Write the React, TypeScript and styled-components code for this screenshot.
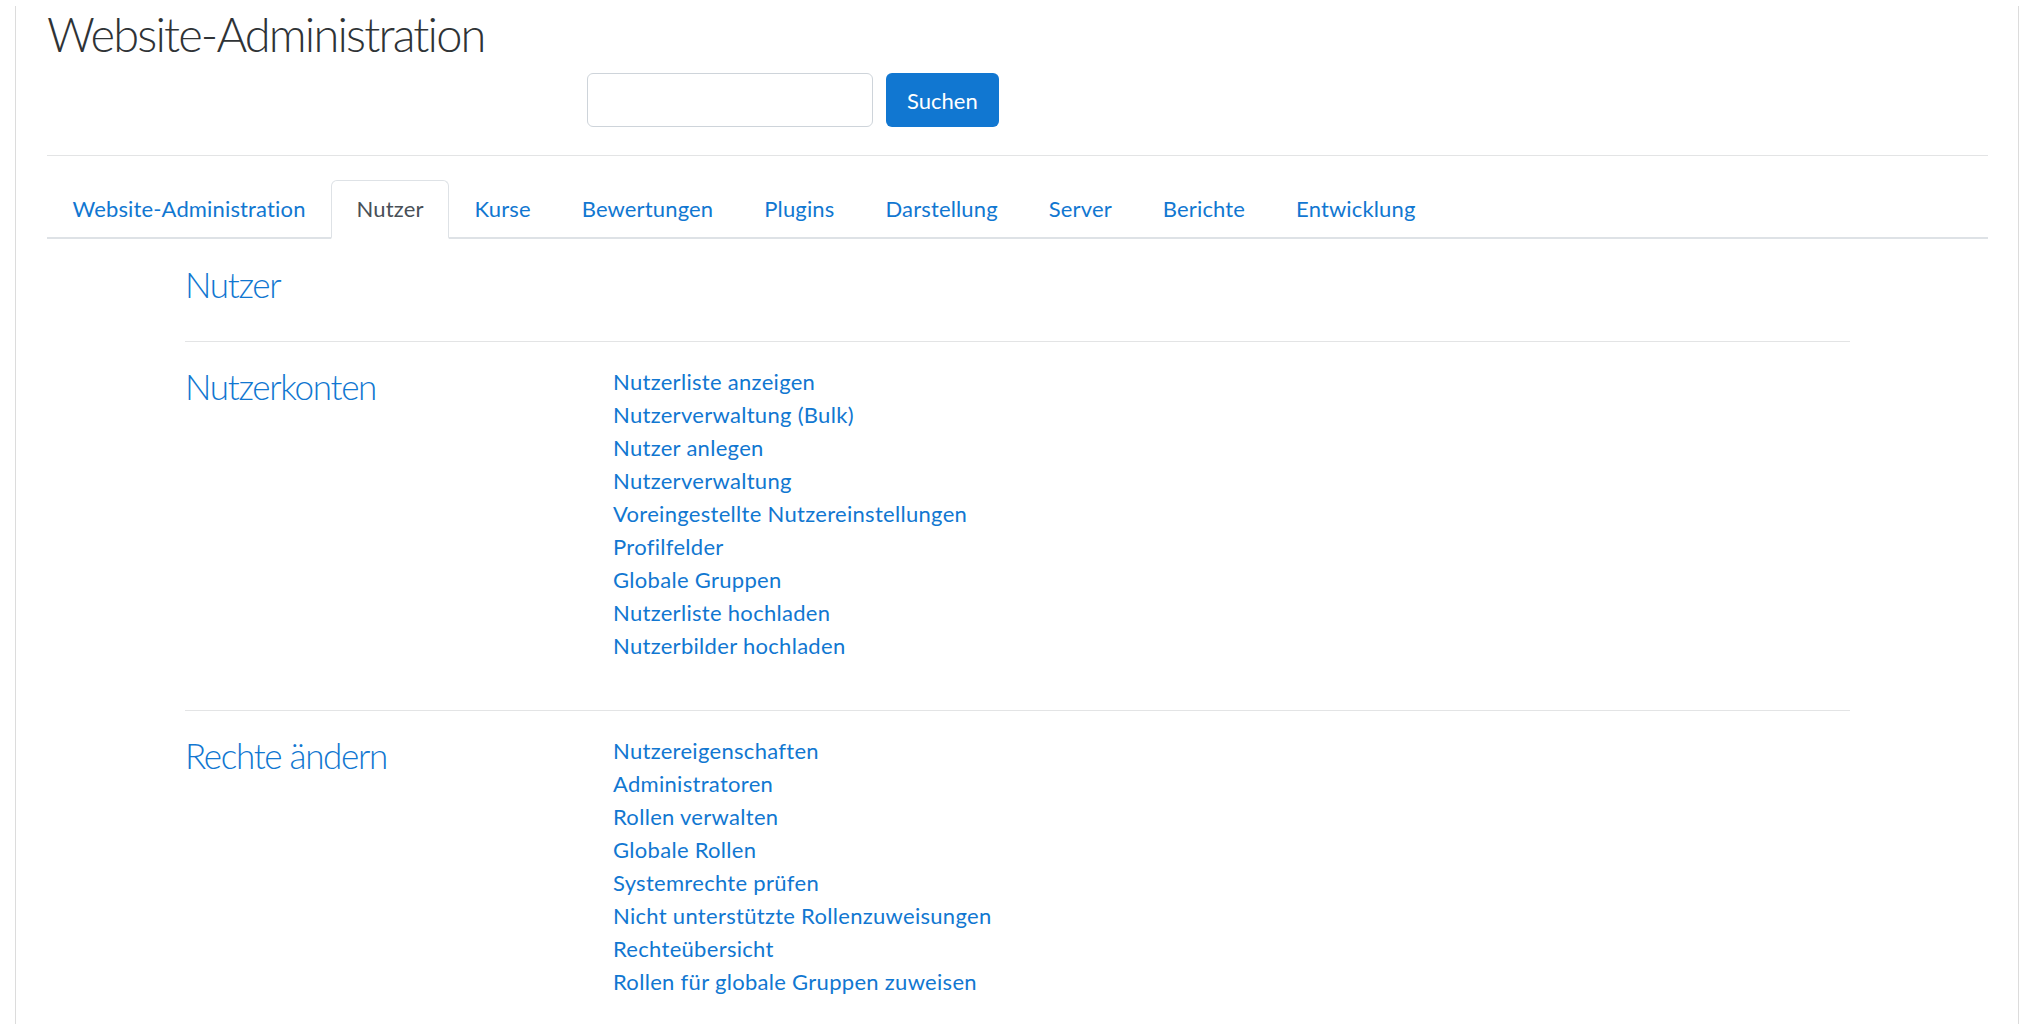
import styled, { createGlobalStyle } from "styled-components";

const GlobalStyle = createGlobalStyle`
    html, body {
        margin: 0;
        padding: 0;
        background: #fff;
    }
    body {
        font-family: Lato, "Liberation Sans", sans-serif;
        color: #373a3c;
    }
    * {
        box-sizing: border-box;
    }
`

const Frame = styled.div`
    margin-left: 15px;
    width: 2004px;
    min-height: 1024px;
    border-left: 1px solid #dcdcdc;
    border-right: 1px solid #dcdcdc;
    padding: 0 30px 0 31px;
`

const Title = styled.h1`
    margin: 6px 0 0 0;
    font-size: 47px;
    font-weight: 300;
    line-height: 1.2;
    letter-spacing: -1.85px;
    color: #2f3336;
`

const SearchForm = styled.form`
    display: flex;
    gap: 13px;
    margin: 11px 0 0 540px;
`

const SearchInput = styled.input`
    width: 286px;
    height: 54px;
    border: 1.5px solid #ced4da;
    border-radius: 6px;
    font-size: 22px;
    padding: 0 16px;
    font-family: inherit;
`

const SearchButton = styled.button`
    height: 54px;
    padding: 0 21px;
    border: none;
    border-radius: 6px;
    background-color: #1177d1;
    color: #fff;
    font-family: inherit;
    font-size: 22px;
    cursor: pointer;
`

const Divider = styled.hr<{ $top: number; $bottom: number }>`
    margin: ${p => p.$top}px 0 ${p => p.$bottom}px 0;
    border: 0;
    border-top: 1.5px solid #e3e4e5;
`

const Tabs = styled.ul`
    display: flex;
    list-style: none;
    margin: 0;
    padding: 0;
    border-bottom: 2px solid #dee2e6;
`

const Tab = styled.li<{ $active?: boolean }>`
    margin-bottom: -2px;
    padding: 11px 24.5px 12px;
    font-size: 22px;
    line-height: 33px;
    letter-spacing: 0.15px;
    border: 1.5px solid ${p => (p.$active ? "#dee2e6" : "transparent")};
    border-bottom: 2px solid ${p => (p.$active ? "#fff" : "transparent")};
    border-radius: 6px 6px 0 0;
    background: ${p => (p.$active ? "#fff" : "transparent")};
    color: ${p => (p.$active ? "#495057" : "#1177d1")};
    cursor: pointer;
`

const Content = styled.div`
    padding: 0 138px;
`

const PageHeading = styled.h2`
    margin: 24px 0 0 0;
    font-size: 35px;
    font-weight: 300;
    line-height: 1.2;
    letter-spacing: -1.3px;
    color: #1177d1;
`

const CategoryRow = styled.section`
    display: grid;
    grid-template-columns: 428px 1fr;
`

const CategoryTitle = styled.h3`
    margin: 0;
    font-size: 35px;
    font-weight: 300;
    line-height: 1.2;
    letter-spacing: -1.3px;
    color: #1177d1;
`

const LinkList = styled.ul`
    list-style: none;
    margin: 0;
    padding: 0;
`

const LinkItem = styled.li`
    font-size: 22px;
    line-height: 33px;
    letter-spacing: 0.3px;
    color: #1177d1;
    cursor: pointer;
`

const tabs = [
    "Website-Administration",
    "Nutzer",
    "Kurse",
    "Bewertungen",
    "Plugins",
    "Darstellung",
    "Server",
    "Berichte",
    "Entwicklung",
]

const categories = [
    {
        title: "Nutzerkonten",
        links: [
            "Nutzerliste anzeigen",
            "Nutzerverwaltung (Bulk)",
            "Nutzer anlegen",
            "Nutzerverwaltung",
            "Voreingestellte Nutzereinstellungen",
            "Profilfelder",
            "Globale Gruppen",
            "Nutzerliste hochladen",
            "Nutzerbilder hochladen",
        ],
    },
    {
        title: "Rechte ändern",
        links: [
            "Nutzereigenschaften",
            "Administratoren",
            "Rollen verwalten",
            "Globale Rollen",
            "Systemrechte prüfen",
            "Nicht unterstützte Rollenzuweisungen",
            "Rechteübersicht",
            "Rollen für globale Gruppen zuweisen",
        ],
    },
]

export default function App() {
    return (
        <>
            <GlobalStyle />
            <Frame>
                <Title>Website-Administration</Title>
                <SearchForm onSubmit={e => e.preventDefault()}>
                    <SearchInput type="text" />
                    <SearchButton type="submit">Suchen</SearchButton>
                </SearchForm>
                <Divider $top={28} $bottom={24} />
                <Tabs>
                    {tabs.map(t => (
                        <Tab key={t} $active={t === "Nutzer"}>{t}</Tab>
                    ))}
                </Tabs>
                <Content>
                    <PageHeading>Nutzer</PageHeading>
                    {categories.map((cat, i) => (
                        <div key={cat.title}>
                            <Divider $top={i === 0 ? 36 : 48} $bottom={23} />
                            <CategoryRow>
                                <CategoryTitle>{cat.title}</CategoryTitle>
                                <LinkList>
                                    {cat.links.map(l => (
                                        <LinkItem key={l}>{l}</LinkItem>
                                    ))}
                                </LinkList>
                            </CategoryRow>
                        </div>
                    ))}
                </Content>
            </Frame>
        </>
    )
}
